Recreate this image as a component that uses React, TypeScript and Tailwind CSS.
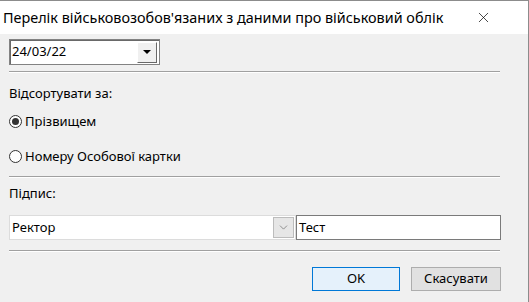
import { ChevronDown, X } from "lucide-react"

const font = { fontFamily: '"Noto Sans", "Open Sans", sans-serif' }

function Separator({ className = "" }: { className?: string }) {
  return (
    <div className={`w-[491px] ${className}`}>
      <div className="h-px bg-[#a0a0a0]" />
      <div className="h-px bg-white" />
    </div>
  )
}

function Radio({ checked, label }: { checked?: boolean; label: string }) {
  return (
    <label className="flex items-center gap-[3px] text-[13px] text-black">
      <span className="flex h-[13px] w-[13px] items-center justify-center rounded-full border border-[#333] bg-white">
        {checked && <span className="h-[7px] w-[7px] rounded-full bg-[#333]" />}
      </span>
      {label}
    </label>
  )
}

export default function App() {
  return (
    <div className="flex h-[302px] w-[529px] flex-col border-r border-t border-[#8c8c8c] bg-[#f0f0f0]" style={font}>
      <div className="flex h-[33px] shrink-0 items-center justify-between bg-white pl-[3px] pr-[36px]">
        <span className="text-[14.4px] text-black">Перелік військовозобов'язаних з даними про військовий облік</span>
        <X size={17} strokeWidth={1} className="text-black" />
      </div>

      <div className="flex flex-col pl-[9px]">
        <div className="mt-[5px] flex h-[26px] w-[151px] items-center border border-[#828282] bg-white pr-[2px] shadow-[inset_1px_1px_0_#696969]">
          <span className="flex-1 pl-[2px] text-[13px] text-black">24/03/22</span>
          <div className="flex h-[21px] w-[20px] items-center justify-center border border-b-[#696969] border-l-white border-r-[#696969] border-t-white bg-[#f0f0f0]">
            <span className="h-0 w-0 border-x-[4px] border-t-[4px] border-x-transparent border-t-black" />
          </div>
        </div>

        <Separator className="mt-[6px]" />

        <span className="mt-[12px] text-[13px] leading-4 text-black">Відсортувати за:</span>
        <div className="mt-[11px]">
          <Radio checked label="Прізвищем" />
        </div>
        <div className="mt-[15px]">
          <Radio label="Номеру Особової картки" />
        </div>

        <Separator className="mt-[10px]" />

        <span className="mt-[7px] text-[13px] leading-4 text-black">Підпис:</span>

        <div className="mt-[14px] flex h-[25px]">
          <div className="flex w-[287px] items-center border border-[#dcdcdc] bg-white pr-px">
            <span className="flex-1 pl-[2px] text-[13px] text-black">Ректор</span>
            <div className="flex h-[21px] w-[21px] items-center justify-center border border-[#bcbcbc] bg-[#e6e6e6]">
              <ChevronDown size={13} strokeWidth={1.2} className="text-[#606060]" />
            </div>
          </div>
          <div className="flex w-[205px] items-center border border-[#7a7a7a] bg-white pl-[2px] text-[13px] text-black">
            Тест
          </div>
        </div>

        <Separator className="mt-[10px]" />

        <div className="mt-[15px] flex w-[492px] justify-end gap-[11px]">
          <button className="h-[24px] w-[88px] border border-[#0078d7] bg-[#e5f1fb] text-[13px] text-black">OK</button>
          <button className="h-[24px] w-[90px] border border-[#adadad] bg-[#e1e1e1] text-[13px] text-black">Скасувати</button>
        </div>
      </div>
    </div>
  )
}
